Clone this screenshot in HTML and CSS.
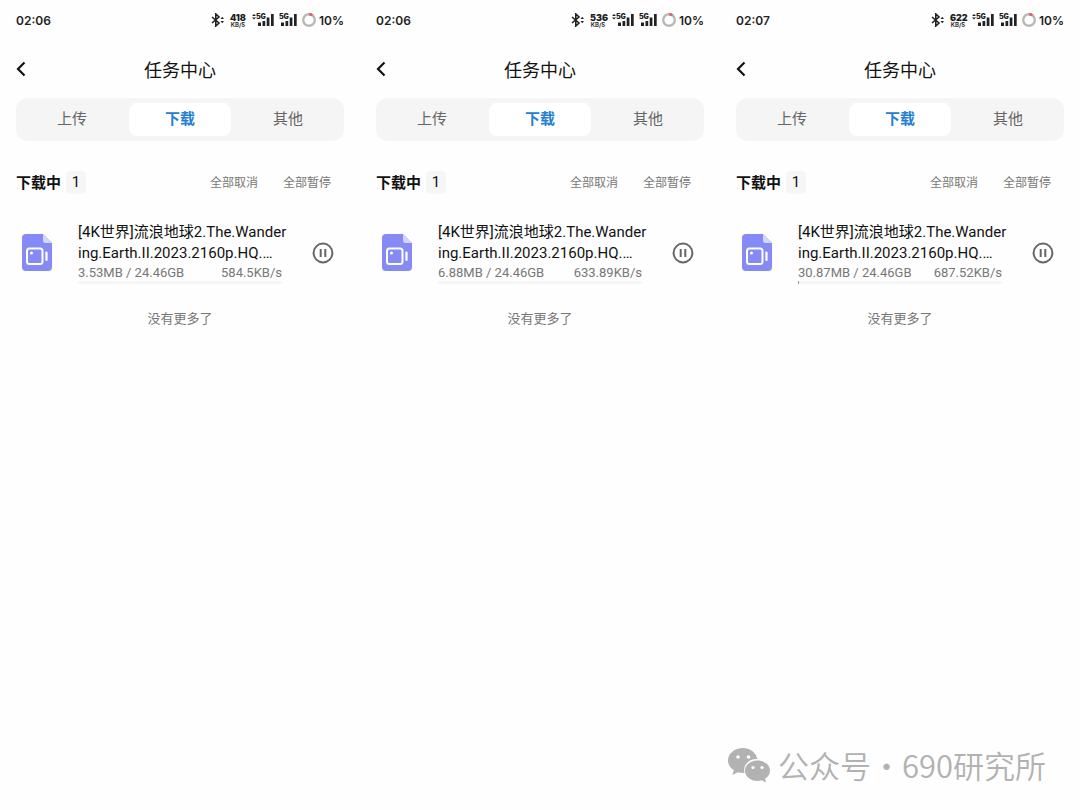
FILE: index.html
```html
<!DOCTYPE html>
<html lang="zh-CN">
<head>
    <meta charset="UTF-8">
    <meta name="viewport" content="width=device-width, initial-scale=1">
    <title>任务中心</title>
    <link rel="stylesheet" href="styles.css">
</head>
<body>
    <!-- shared icons -->
    <svg class="sprite" aria-hidden="true">
        <symbol id="bluetooth" viewBox="0 0 14 14">
            <path d="M1 4l7 6-3.200 3V1L8 4l-7 6" fill="none" stroke="currentColor" stroke-width="1.600"/>
            <path d="M9.500 6l1.700-2.200L13 6zM9.500 8l1.700 2.200L13 8z" fill="currentColor"/>
        </symbol>
        <symbol id="arrows" viewBox="0 0 4 14">
            <path d="M0 3l2-2 2 2zM0 4.500l2 2 2-2z" fill="currentColor"/>
        </symbol>
        <symbol id="bars" viewBox="0 0 18 14">
            <path d="M2 9.500h3V13H2zM6.500 8h2.700v5H6.500zM10.700 4.500h2.700V13h-2.700zM15 1h2.700v12H15z" fill="currentColor"/>
        </symbol>
        <symbol id="ring" viewBox="0 0 14 14">
            <circle cx="7" cy="7" r="5.800" fill="none" stroke="#b9b9b9" stroke-width="2.400"/>
            <path d="M7 1.200a5.800 5.800 0 0 1 3.500 1.200" fill="none" stroke="#d9636b" stroke-width="2.400"/>
        </symbol>
        <symbol id="back" viewBox="0 0 10 16">
            <path d="M8.500 1.500L2 8l6.500 6.500" fill="none" stroke="currentColor" stroke-width="2.200"/>
        </symbol>
        <symbol id="video" viewBox="0 0 30 37">
            <path d="M4 0h17l9 9v24a4 4 0 0 1-4 4H4a4 4 0 0 1-4-4V4a4 4 0 0 1 4-4z" fill="#858af5"/>
            <path d="M21 0l9 9h-6.500A2.500 2.500 0 0 1 21 6.500z" fill="#d3d5fc"/>
            <rect x="5" y="14.500" width="15.500" height="15.500" rx="2.500" fill="none" stroke="#fff" stroke-width="2"/>
            <circle cx="9.500" cy="19" r="1.500" fill="#fff"/>
            <path d="M24.500 18.500v7.500" stroke="#fff" stroke-width="2.200" stroke-linecap="round"/>
        </symbol>
        <symbol id="pause" viewBox="0 0 22 22">
            <circle cx="11" cy="11" r="9.400" fill="none" stroke="currentColor" stroke-width="2"/>
            <path d="M8.700 7v8M13.300 7v8" stroke="currentColor" stroke-width="2"/>
        </symbol>
    </svg>

    <main class="screens">
        <section class="phone">
            <div class="status-bar">
                <span class="clock">02:06</span>
                <svg class="bluetooth"><use href="#bluetooth"/></svg>
                <span class="net-speed"><b>418</b><i>KB/S</i></span>
                <svg class="arrows"><use href="#arrows"/></svg>
                <span class="signal"><svg><use href="#bars"/></svg><b>5G</b></span>
                <span class="signal"><svg><use href="#bars"/></svg><b>5G</b></span>
                <svg class="ring"><use href="#ring"/></svg>
                <span class="battery">10%</span>
            </div>
            <header class="title-bar">
                <button type="button" class="back" aria-label="返回"><svg><use href="#back"/></svg></button>
                <h1>任务中心</h1>
            </header>
            <nav class="tabs">
                <button type="button">上传</button>
                <button type="button" class="active">下载</button>
                <button type="button">其他</button>
            </nav>
            <div class="list-head">
                <h2>下载中</h2>
                <span class="count">1</span>
                <button type="button">全部取消</button>
                <button type="button">全部暂停</button>
            </div>
            <article class="task">
                <svg class="file-icon"><use href="#video"/></svg>
                <div class="task-info">
                    <p class="file-name">[4K世界]流浪地球2.The.Wander<br>ing.Earth.II.2023.2160p.HQ.…</p>
                    <p class="file-meta"><span>3.53MB / 24.46GB</span><span>584.5KB/s</span></p>
                    <progress value="3.53" max="25047" aria-label="下载进度"></progress>
                </div>
                <button type="button" class="pause" aria-label="暂停"><svg><use href="#pause"/></svg></button>
            </article>
            <p class="no-more">没有更多了</p>
        </section>

        <section class="phone">
            <div class="status-bar">
                <span class="clock">02:06</span>
                <svg class="bluetooth"><use href="#bluetooth"/></svg>
                <span class="net-speed"><b>536</b><i>KB/S</i></span>
                <svg class="arrows"><use href="#arrows"/></svg>
                <span class="signal"><svg><use href="#bars"/></svg><b>5G</b></span>
                <span class="signal"><svg><use href="#bars"/></svg><b>5G</b></span>
                <svg class="ring"><use href="#ring"/></svg>
                <span class="battery">10%</span>
            </div>
            <header class="title-bar">
                <button type="button" class="back" aria-label="返回"><svg><use href="#back"/></svg></button>
                <h1>任务中心</h1>
            </header>
            <nav class="tabs">
                <button type="button">上传</button>
                <button type="button" class="active">下载</button>
                <button type="button">其他</button>
            </nav>
            <div class="list-head">
                <h2>下载中</h2>
                <span class="count">1</span>
                <button type="button">全部取消</button>
                <button type="button">全部暂停</button>
            </div>
            <article class="task">
                <svg class="file-icon"><use href="#video"/></svg>
                <div class="task-info">
                    <p class="file-name">[4K世界]流浪地球2.The.Wander<br>ing.Earth.II.2023.2160p.HQ.…</p>
                    <p class="file-meta"><span>6.88MB / 24.46GB</span><span>633.89KB/s</span></p>
                    <progress value="6.88" max="25047" aria-label="下载进度"></progress>
                </div>
                <button type="button" class="pause" aria-label="暂停"><svg><use href="#pause"/></svg></button>
            </article>
            <p class="no-more">没有更多了</p>
        </section>

        <section class="phone">
            <div class="status-bar">
                <span class="clock">02:07</span>
                <svg class="bluetooth"><use href="#bluetooth"/></svg>
                <span class="net-speed"><b>622</b><i>KB/S</i></span>
                <svg class="arrows"><use href="#arrows"/></svg>
                <span class="signal"><svg><use href="#bars"/></svg><b>5G</b></span>
                <span class="signal"><svg><use href="#bars"/></svg><b>5G</b></span>
                <svg class="ring"><use href="#ring"/></svg>
                <span class="battery">10%</span>
            </div>
            <header class="title-bar">
                <button type="button" class="back" aria-label="返回"><svg><use href="#back"/></svg></button>
                <h1>任务中心</h1>
            </header>
            <nav class="tabs">
                <button type="button">上传</button>
                <button type="button" class="active">下载</button>
                <button type="button">其他</button>
            </nav>
            <div class="list-head">
                <h2>下载中</h2>
                <span class="count">1</span>
                <button type="button">全部取消</button>
                <button type="button">全部暂停</button>
            </div>
            <article class="task">
                <svg class="file-icon"><use href="#video"/></svg>
                <div class="task-info">
                    <p class="file-name">[4K世界]流浪地球2.The.Wander<br>ing.Earth.II.2023.2160p.HQ.…</p>
                    <p class="file-meta"><span>30.87MB / 24.46GB</span><span>687.52KB/s</span></p>
                    <progress value="30.87" max="25047" aria-label="下载进度"></progress>
                </div>
                <button type="button" class="pause" aria-label="暂停"><svg><use href="#pause"/></svg></button>
            </article>
            <p class="no-more">没有更多了</p>
        </section>
    </main>

    <footer class="watermark">
        <svg viewBox="0 0 42 34" aria-hidden="true">
            <path d="M15 0C6.700 0 0 5.500 0 12.500c0 4 2.200 7.300 5.700 9.600L4.500 27l5.300-2.800c1.700.5 3.400.8 5.200.8h1.500C14.500 17 21 10.500 29.500 11 28 4.500 22 0 15 0z"/>
            <path d="M29.500 12.500c-7 0-12.500 4.500-12.500 10.200S22.500 33 29.500 33c1.500 0 3-.3 4.300-.7L38 34.500l-1-3.800c3-1.900 5-4.700 5-8 0-5.700-5.500-10.200-12.500-10.200z"/>
            <g class="eyes">
                <circle cx="10" cy="9" r="1.800"/>
                <circle cx="20.500" cy="9" r="1.800"/>
                <circle cx="25" cy="19.500" r="1.600"/>
                <circle cx="34" cy="19.500" r="1.600"/>
            </g>
        </svg>
        <span>公众号·</span>
        <span>690研究所</span>
    </footer>
</body>
</html>
```

FILE: styles.css
```css
* {
    box-sizing: border-box;
}

body {
    margin: 0;
    min-height: 100vh;
    display: flex;
    flex-direction: column;
    background-color: #fefefe;
    color: #111;
    font-family: Roboto, "Noto Sans CJK SC", sans-serif;
}

h1, h2, p {
    margin: 0;
}

svg {
    display: block;
    flex: none;
}

button {
    padding: 0;
    border: none;
    background: none;
    color: inherit;
    font: inherit;
    cursor: pointer;
}

.sprite {
    position: absolute;
    width: 0;
    height: 0;
}

.screens {
    display: grid;
    grid-template-columns: repeat(3, minmax(0, 1fr));
}

.phone {
    padding: 0 16px;
}

/* status bar */
.status-bar {
    display: flex;
    align-items: center;
    height: 40px;
    color: #222;
    font-family: Inter, sans-serif;
    font-size: 12px;
    font-weight: 600;
}

.clock {
    margin-right: auto;
}

.bluetooth {
    width: 14px;
    height: 14px;
}

.net-speed {
    width: 16px;
    margin: 0 6px 0 5px;
    text-align: center;
    font-size: 9px;
    line-height: 8px;
}

.net-speed b, .net-speed i {
    display: block;
}

.net-speed i {
    font-size: 6px;
    line-height: 5px;
    font-style: normal;
}

.arrows {
    width: 4px;
    height: 14px;
}

.signal {
    position: relative;
    margin-right: 5px;
}

.signal svg {
    width: 18px;
    height: 14px;
}

.signal b {
    position: absolute;
    top: 0;
    left: 0;
    font-size: 7px;
    line-height: 7px;
}

.ring {
    width: 14px;
    height: 14px;
    margin-right: 3px;
}

/* title */
.title-bar {
    display: grid;
    grid-template-columns: 10px 1fr 10px;
    align-items: center;
    height: 58px;
}

.back svg {
    width: 10px;
    height: 16px;
}

.title-bar h1 {
    padding-bottom: 1px;
    text-align: center;
    font-size: 18px;
    font-weight: 400;
}

/* tabs */
.tabs {
    display: grid;
    grid-template-columns: repeat(3, 1fr);
    gap: 6px;
    padding: 5px;
    border-radius: 12px;
    background-color: #f5f5f5;
}

.tabs button {
    height: 33px;
    padding-bottom: 4px;
    border-radius: 8px;
    color: #666;
    font-size: 15px;
}

.tabs .active {
    background-color: #fff;
    color: #2680d0;
    font-weight: bold;
}

/* list header */
.list-head {
    display: flex;
    align-items: center;
    height: 22px;
    margin-top: 30px;
    padding-right: 13px;
}

.list-head h2 {
    padding-bottom: 1px;
    font-size: 15px;
    font-weight: bold;
}

.count {
    width: 20px;
    margin: 0 auto 0 5px;
    border-radius: 4px;
    background-color: #f6f6f6;
    text-align: center;
    font-size: 15px;
    line-height: 23px;
}

.list-head button {
    margin-left: 25px;
    padding-bottom: 1px;
    color: #777;
    font-size: 12px;
}

/* task row */
.task {
    display: flex;
    align-items: center;
    margin-top: 28px;
    padding: 0 10px 0 6px;
}

.file-icon {
    width: 30px;
    height: 37px;
}

.task-info {
    flex: 1;
    min-width: 0;
    margin: 0 30px 0 26px;
}

.file-name {
    padding-top: 1px;
    white-space: nowrap;
    font-size: 15px;
    line-height: 21px;
}

.file-meta {
    display: flex;
    justify-content: space-between;
    color: #777;
    font-size: 13px;
    line-height: 17px;
}

progress {
    display: block;
    width: 100%;
    height: 3px;
    border: none;
    appearance: none;
}

progress::-webkit-progress-bar {
    border-radius: 2px;
    background-color: #f5f5f5;
}

progress::-webkit-progress-value {
    background-color: #999;
}

.pause {
    color: #666;
}

.pause svg {
    width: 22px;
    height: 22px;
}

.no-more {
    margin-top: 25px;
    text-align: center;
    color: #777;
    font-size: 13px;
    line-height: 20px;
}

/* account mark */
.watermark {
    display: flex;
    align-items: center;
    margin-top: auto;
    margin-left: auto;
    padding: 0 34px 23px 0;
    color: #b2b2b2;
    font-family: "Noto Sans CJK SC", sans-serif;
    font-size: 31px;
    font-weight: 350;
    line-height: 44px;
}

.watermark svg {
    width: 42px;
    height: 34px;
    margin-right: 8px;
    fill: #b2b2b2;
    overflow: visible;
}

.eyes {
    fill: #fefefe;
}
```
